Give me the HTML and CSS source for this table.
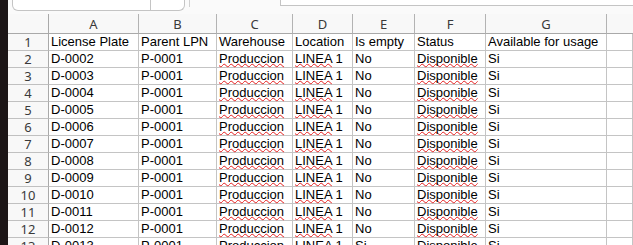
FILE: index.html
```html
<!DOCTYPE html>
<html>
<head>
<meta charset="utf-8">
<link rel="stylesheet" href="styles.css">
</head>
<body>
<div class="app">
  <div class="side"></div>
  <div class="main">
    <div class="toolbar">
      <div class="namebox"><div class="namefield"></div><div class="namebtn"></div></div>
      <div class="funcs"></div>
      <div class="formula"></div>
    </div>
    <div class="sheet">
      <div class="corner"></div>
      <div class="ch">A</div><div class="ch">B</div><div class="ch">C</div><div class="ch">D</div><div class="ch">E</div><div class="ch">F</div><div class="ch">G</div><div class="ch last"></div>

      <div class="rh">1</div><div class="c">License Plate</div><div class="c">Parent LPN</div><div class="c">Warehouse</div><div class="c">Location</div><div class="c">Is empty</div><div class="c">Status</div><div class="c">Available for usage</div><div class="c"></div>

      <div class="rh">2</div><div class="c">D-0002</div><div class="c">P-0001</div><div class="c"><span class="sp">Produccion</span></div><div class="c"><span class="sp">LINEA</span> 1</div><div class="c">No</div><div class="c"><span class="sp">Disponible</span></div><div class="c">Si</div><div class="c"></div>
      <div class="rh">3</div><div class="c">D-0003</div><div class="c">P-0001</div><div class="c"><span class="sp">Produccion</span></div><div class="c"><span class="sp">LINEA</span> 1</div><div class="c">No</div><div class="c"><span class="sp">Disponible</span></div><div class="c">Si</div><div class="c"></div>
      <div class="rh">4</div><div class="c">D-0004</div><div class="c">P-0001</div><div class="c"><span class="sp">Produccion</span></div><div class="c"><span class="sp">LINEA</span> 1</div><div class="c">No</div><div class="c"><span class="sp">Disponible</span></div><div class="c">Si</div><div class="c"></div>
      <div class="rh">5</div><div class="c">D-0005</div><div class="c">P-0001</div><div class="c"><span class="sp">Produccion</span></div><div class="c"><span class="sp">LINEA</span> 1</div><div class="c">No</div><div class="c"><span class="sp">Disponible</span></div><div class="c">Si</div><div class="c"></div>
      <div class="rh">6</div><div class="c">D-0006</div><div class="c">P-0001</div><div class="c"><span class="sp">Produccion</span></div><div class="c"><span class="sp">LINEA</span> 1</div><div class="c">No</div><div class="c"><span class="sp">Disponible</span></div><div class="c">Si</div><div class="c"></div>
      <div class="rh">7</div><div class="c">D-0007</div><div class="c">P-0001</div><div class="c"><span class="sp">Produccion</span></div><div class="c"><span class="sp">LINEA</span> 1</div><div class="c">No</div><div class="c"><span class="sp">Disponible</span></div><div class="c">Si</div><div class="c"></div>
      <div class="rh">8</div><div class="c">D-0008</div><div class="c">P-0001</div><div class="c"><span class="sp">Produccion</span></div><div class="c"><span class="sp">LINEA</span> 1</div><div class="c">No</div><div class="c"><span class="sp">Disponible</span></div><div class="c">Si</div><div class="c"></div>
      <div class="rh">9</div><div class="c">D-0009</div><div class="c">P-0001</div><div class="c"><span class="sp">Produccion</span></div><div class="c"><span class="sp">LINEA</span> 1</div><div class="c">No</div><div class="c"><span class="sp">Disponible</span></div><div class="c">Si</div><div class="c"></div>
      <div class="rh">10</div><div class="c">D-0010</div><div class="c">P-0001</div><div class="c"><span class="sp">Produccion</span></div><div class="c"><span class="sp">LINEA</span> 1</div><div class="c">No</div><div class="c"><span class="sp">Disponible</span></div><div class="c">Si</div><div class="c"></div>
      <div class="rh">11</div><div class="c">D-0011</div><div class="c">P-0001</div><div class="c"><span class="sp">Produccion</span></div><div class="c"><span class="sp">LINEA</span> 1</div><div class="c">No</div><div class="c"><span class="sp">Disponible</span></div><div class="c">Si</div><div class="c"></div>
      <div class="rh">12</div><div class="c">D-0012</div><div class="c">P-0001</div><div class="c"><span class="sp">Produccion</span></div><div class="c"><span class="sp">LINEA</span> 1</div><div class="c">No</div><div class="c"><span class="sp">Disponible</span></div><div class="c">Si</div><div class="c"></div>
      <div class="rh">13</div><div class="c">D-0013</div><div class="c">P-0001</div><div class="c"><span class="sp">Produccion</span></div><div class="c"><span class="sp">LINEA</span> 1</div><div class="c">Si</div><div class="c"><span class="sp">Disponible</span></div><div class="c">Si</div><div class="c"></div>
    </div>
  </div>
</div>
</body>
</html>
```
FILE: styles.css
```css
html, body {
  margin: 0;
  padding: 0;
  background: #ffffff;
  overflow: hidden;
}
.app {
  display: flex;
  width: 633px;
  height: 245px;
  overflow: hidden;
}
.side {
  width: 8px;
  flex: none;
  background: #1c1617;
}
.main {
  flex: 1;
  display: flex;
  flex-direction: column;
  min-width: 0;
  background: #fafafa;
}
.toolbar {
  height: 14px;
  flex: none;
  display: flex;
  align-items: flex-start;
}
.namebox {
  margin-left: 4px;
  width: 173px;
  height: 11px;
  box-sizing: border-box;
  border: 1px solid #c4c4c4;
  border-top: none;
  border-radius: 0 0 6px 6px;
  background: #ffffff;
  display: flex;
}
.namefield {
  width: 137px;
  border-right: 1px solid #c4c4c4;
}
.namebtn { flex: 1; }
.funcs {
  margin-left: 4px;
  width: 90px;
  height: 7px;
  border-left: 1px solid #d0d0d0;
}
.formula {
  flex: 1;
  height: 6px;
  box-sizing: border-box;
  border-left: 1px solid #c4c4c4;
  border-bottom: 1px solid #c4c4c4;
  background: #ffffff;
}
.sheet {
  display: grid;
  grid-template-columns: 41px 90px 78px 76px 60px 62px 71px 121px 1fr;
  grid-template-rows: 20px;
  grid-auto-rows: 17px;
  background: #ffffff;
  font-family: "Liberation Sans", Arial, sans-serif;
  font-size: 13px;
  color: #000000;
}
.corner, .ch, .rh {
  background: #f8f8f8;
  box-sizing: border-box;
  font-family: "Noto Sans", "Open Sans", sans-serif;
  font-size: 13px;
  color: #3a3a3a;
}
.corner {
  border-right: 1px solid #a9a9a9;
  border-bottom: 1px solid #a9a9a9;
}
.ch {
  border-right: 1px solid #b3b3b3;
  border-bottom: 1px solid #a9a9a9;
  text-align: center;
  line-height: 20px;
}
.ch.last { border-right: none; }
.rh {
  border-right: 1px solid #a9a9a9;
  border-bottom: 1px solid #c0c0c0;
  text-align: center;
  line-height: 17px;
}
.c {
  box-sizing: border-box;
  border-right: 1px solid #c4c4c4;
  border-bottom: 1px solid #c4c4c4;
  padding-left: 2px;
  line-height: 16px;
  white-space: nowrap;
}
.sp {
  text-decoration-line: underline;
  text-decoration-style: wavy;
  text-decoration-color: #e41e1e;
  text-decoration-thickness: 1px;
  text-underline-offset: 0px;
  text-decoration-skip-ink: none;
}
```
